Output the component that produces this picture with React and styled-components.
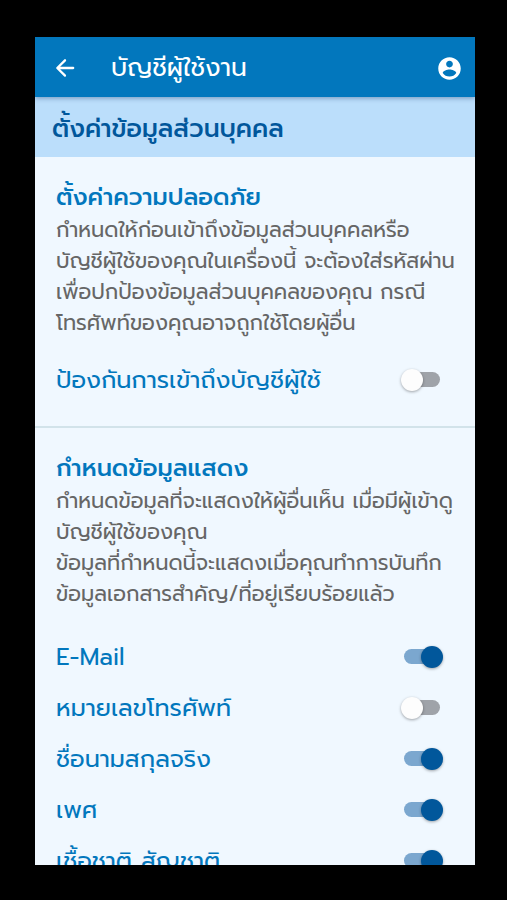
import React, { useState } from 'react';
import styled, { createGlobalStyle } from 'styled-components';

const GlobalStyle = createGlobalStyle`
  * {
    box-sizing: border-box;
  }

  body {
    margin: 0;
    background: #000;
    font-family: Prompt, 'Noto Sans Thai', 'Noto Sans', sans-serif;
  }
`;

const Frame = styled.div`
  display: flex;
  height: 100vh;
  padding: 37px 32px 35px 35px;
`;

const Screen = styled.main`
  flex: 1;
  min-width: 0;
  overflow: hidden;
  background: #f0f8ff;
`;

const AppBar = styled.header`
  position: relative;
  display: flex;
  align-items: center;
  height: 60px;
  padding: 2px 12px 0 16px;
  background: #0277bd;
  color: #fff;
  box-shadow: 0 1px 5px rgba(0, 40, 90, 0.4);
`;

const IconButton = styled.button`
  display: flex;
  padding: 0;
  border: 0;
  background: none;
  color: inherit;
  cursor: pointer;
`;

const AppTitle = styled.h1`
  flex: 1;
  margin: 0 0 0 32px;
  font-size: 25px;
  font-weight: 400;
  line-height: 32px;
  white-space: nowrap;
`;

const Banner = styled.h2`
  display: flex;
  align-items: center;
  height: 60px;
  margin: 0;
  padding: 3px 17px 0;
  background: #bbdefb;
  color: #01579b;
  font-size: 25px;
  font-weight: 500;
  line-height: 32px;
  white-space: nowrap;
`;

const Section = styled.section`
  padding: 22px 22px 21px 21px;

  & + & {
    border-top: 2px solid #d2e3ea;
  }
`;

const SectionTitle = styled.h3`
  margin: 0;
  color: #0277bd;
  font-size: 24px;
  font-weight: 500;
  line-height: 36px;
`;

const Text = styled.p`
  margin: 0 0 15px;
  color: #666;
  font-size: 21px;
  line-height: 31px;
  white-space: nowrap;
`;

const FieldList = styled.div`
  padding-top: 6px;
`;

const Row = styled.label`
  display: flex;
  align-items: center;
  justify-content: space-between;
  height: 51px;
  padding-right: 13px;
  color: #0277bd;
  font-size: 24px;
  font-weight: 400;
  line-height: 32px;
  white-space: nowrap;
  cursor: pointer;
`;

const Switch = styled.input`
  appearance: none;
  display: flex;
  align-items: center;
  width: 36px;
  height: 15px;
  margin: 0;
  border-radius: 8px;
  background: #9fa3a9;
  cursor: pointer;

  &::before {
    content: '';
    width: 22px;
    height: 22px;
    flex-shrink: 0;
    margin-left: -3px;
    border-radius: 50%;
    background: #fdfdfd;
    box-shadow: 0 1px 3px rgba(0, 0, 0, 0.35);
  }

  &:checked {
    background: #7ba7cf;
  }

  &:checked::before {
    margin-left: 17px;
    background: #01579b;
  }
`;

const BackIcon = () => (
  <svg width="28" height="28" viewBox="0 0 24 24" fill="currentColor">
    <path d="M19 11H7.83l4.88-4.88c.39-.39.39-1.03 0-1.42a1 1 0 0 0-1.41 0l-6.59 6.59a1 1 0 0 0 0 1.41l6.59 6.6a1 1 0 0 0 1.41-1.41L7.83 13H19a1 1 0 0 0 0-2z" />
  </svg>
);

const AccountIcon = () => (
  <svg width="27" height="27" viewBox="0 0 24 24" fill="currentColor">
    <path d="M12 2C6.48 2 2 6.48 2 12s4.48 10 10 10 10-4.48 10-10S17.52 2 12 2zm0 3c1.66 0 3 1.34 3 3s-1.34 3-3 3-3-1.34-3-3 1.34-3 3-3zm0 14.2c-2.5 0-4.71-1.28-6-3.22.03-1.99 4-3.08 6-3.08 1.99 0 5.97 1.09 6 3.08-1.29 1.94-3.5 3.22-6 3.22z" />
  </svg>
);

const fields = [
  { id: 'email', label: 'E-Mail', on: true },
  { id: 'phone', label: 'หมายเลขโทรศัพท์', on: false },
  { id: 'name', label: 'ชื่อนามสกุลจริง', on: true },
  { id: 'gender', label: 'เพศ', on: true },
  { id: 'nationality', label: 'เชื้อชาติ สัญชาติ', on: true },
];

const SwitchRow = ({ id, label, on }) => {
  const [checked, setChecked] = useState(on);

  return (
    <Row htmlFor={id}>
      {label}
      <Switch
        id={id}
        type="checkbox"
        role="switch"
        checked={checked}
        onChange={(e) => setChecked(e.target.checked)}
      />
    </Row>
  );
};

const App = () => (
  <Frame>
    <GlobalStyle />
    <Screen>
      <AppBar>
        <IconButton aria-label="กลับ">
          <BackIcon />
        </IconButton>
        <AppTitle>บัญชีผู้ใช้งาน</AppTitle>
        <IconButton aria-label="บัญชี">
          <AccountIcon />
        </IconButton>
      </AppBar>
      <Banner>ตั้งค่าข้อมูลส่วนบุคคล</Banner>

      <Section>
        <SectionTitle>ตั้งค่าความปลอดภัย</SectionTitle>
        <Text>
          กำหนดให้ก่อนเข้าถึงข้อมูลส่วนบุคคลหรือ
          <br />
          บัญชีผู้ใช้ของคุณในเครื่องนี้ จะต้องใส่รหัสผ่าน
          <br />
          เพื่อปกป้องข้อมูลส่วนบุคคลของคุณ กรณี
          <br />
          โทรศัพท์ของคุณอาจถูกใช้โดยผู้อื่น
        </Text>
        <SwitchRow id="protect" label="ป้องกันการเข้าถึงบัญชีผู้ใช้" on={false} />
      </Section>

      <Section>
        <SectionTitle>กำหนดข้อมูลแสดง</SectionTitle>
        <Text>
          กำหนดข้อมูลที่จะแสดงให้ผู้อื่นเห็น เมื่อมีผู้เข้าดู
          <br />
          บัญชีผู้ใช้ของคุณ
          <br />
          ข้อมูลที่กำหนดนี้จะแสดงเมื่อคุณทำการบันทึก
          <br />
          ข้อมูลเอกสารสำคัญ/ที่อยู่เรียบร้อยแล้ว
        </Text>
        <FieldList>
          {fields.map((field) => (
            <SwitchRow key={field.id} {...field} />
          ))}
        </FieldList>
      </Section>
    </Screen>
  </Frame>
);

export default App;
